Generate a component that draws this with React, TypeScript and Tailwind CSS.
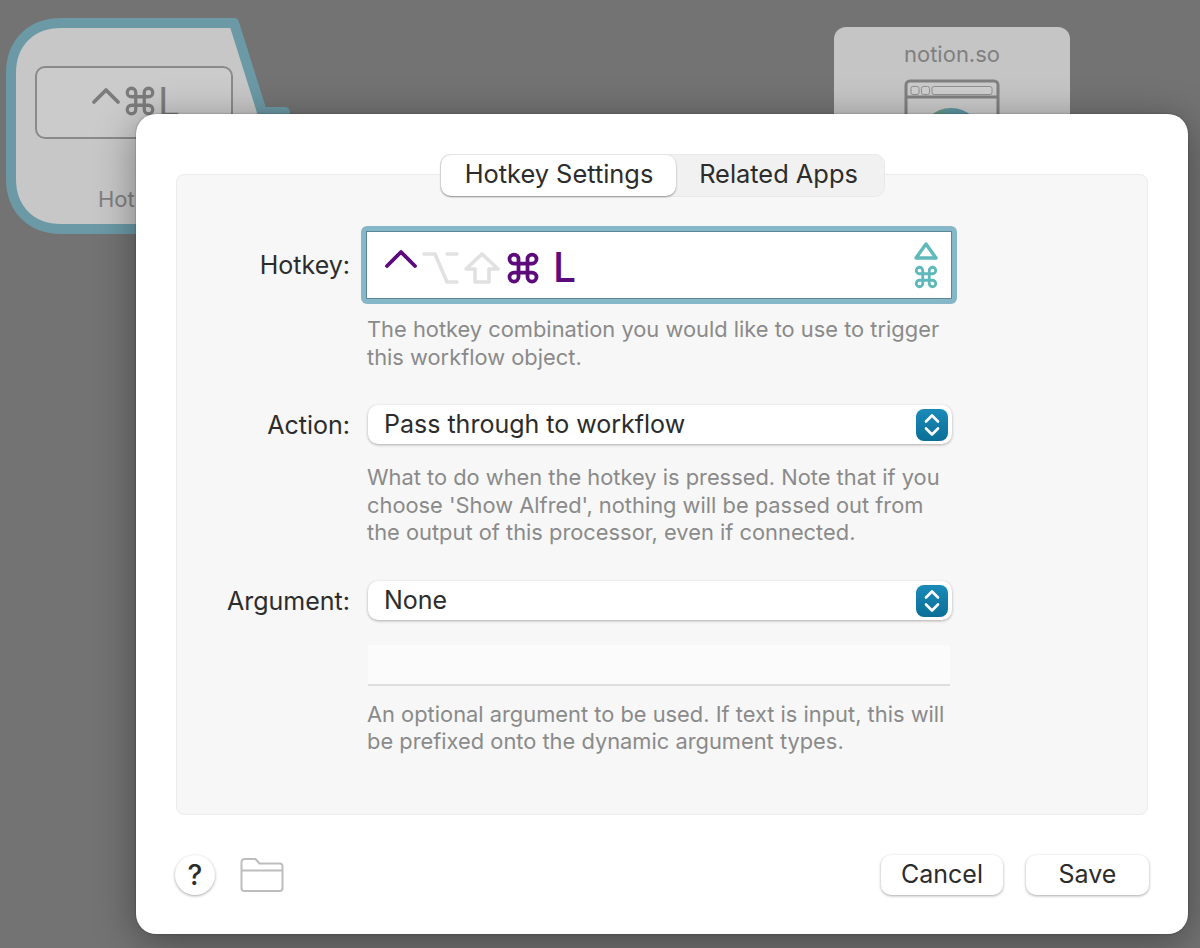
import { Command } from 'lucide-react';

const font = "font-['Inter','Liberation_Sans',sans-serif]";

function SelectField({ value }: { value: string }) {
  return (
    <div className="flex h-[39px] w-[584px] items-center justify-between rounded-[10px] bg-white pl-[16px] pr-[4px] text-[25px] text-[#2c2c2c] shadow-[0_1px_3px_rgba(0,0,0,0.3)]">
      <span>{value}</span>
      <span className="flex h-[32px] w-[32px] items-center justify-center rounded-[8px] bg-gradient-to-b from-[#1a8bb8] to-[#0b6f97]">
        <svg width="18" height="26" viewBox="0 0 18 26" fill="none" stroke="white" strokeWidth="2.6" strokeLinecap="round" strokeLinejoin="round">
          <path d="M3 9.5 9 3.5l6 6" />
          <path d="M3 16.5l6 6 6-6" />
        </svg>
      </span>
    </div>
  );
}

function Description({ children, className }: { children: React.ReactNode; className: string }) {
  return <p className={`text-[21.85px] leading-[27.5px] text-[#8a8a8a] ${className}`}>{children}</p>;
}

function Label({ children }: { children: React.ReactNode }) {
  return <div className="w-[173px] shrink-0 pt-[2px] text-right text-[25px] text-[#2c2c2c]">{children}</div>;
}

function HotkeyNode() {
  return (
    <div className="absolute left-0 top-0 h-[240px] w-[300px]">
      <svg width="300" height="240" viewBox="0 0 300 240" className="absolute inset-0">
        <path
          d="M61 23H234L262 112H285V229H61C31 229 11 209 11 179V73C11 43 31 23 61 23Z"
          fill="#c7c7c7"
          stroke="#6b99a5"
          strokeWidth="10"
          strokeLinejoin="round"
        />
      </svg>
      <div className="absolute left-[35px] top-[66px] flex h-[73px] w-[198px] items-center rounded-[10px] border-2 border-[#8a8a8a] bg-[#cbcbcb] pb-[3px] pl-[54px] text-[#7c7c7c]">
        <svg width="30" height="18" viewBox="0 0 30 18" fill="none" stroke="currentColor" strokeWidth="3.8" strokeLinecap="round" strokeLinejoin="round" className="mb-[10px]">
          <path d="M3 15 15 3l12 12" />
        </svg>
        <Command size={34} strokeWidth={2.3} className="ml-[2px]" />
        <span className="ml-[1px] text-[39px] leading-none">L</span>
      </div>
      <div className="absolute left-[98px] top-[183px] text-[22px] text-[#7f7f7f]">Hot</div>
    </div>
  );
}

function NotionNode() {
  return (
    <div className="absolute left-[834px] top-[27px] flex h-[120px] w-[236px] flex-col items-center rounded-[12px] bg-[#c5c5c5] pt-[13px]">
      <div className="text-[22px] leading-[28px] text-[#7f7f7f]">notion.so</div>
      <svg width="96" height="50" viewBox="0 0 96 50" className="mt-[11px]" fill="none">
        <defs>
          <linearGradient id="globe" x1="0" y1="0" x2="1" y2="0">
            <stop offset="0" stopColor="#6f9f6a" />
            <stop offset="0.5" stopColor="#5e97a0" />
            <stop offset="1" stopColor="#5c8fb0" />
          </linearGradient>
        </defs>
        <rect x="2" y="2" width="92" height="60" rx="4" fill="#cbcbcb" stroke="#808080" strokeWidth="3" />
        <path d="M2 18H94" stroke="#808080" strokeWidth="3" />
        <rect x="7" y="7.5" width="8" height="8" rx="2" fill="#cfcfcf" stroke="#909090" />
        <rect x="17.500" y="7.5" width="8" height="8" rx="2" fill="#cfcfcf" stroke="#909090" />
        <rect x="28" y="7.5" width="60" height="8" rx="2" fill="#cfcfcf" stroke="#909090" />
        <circle cx="47" cy="60" r="31" fill="url(#globe)" />
      </svg>
    </div>
  );
}

function HotkeyField() {
  return (
    <div className="flex h-[78px] w-[596px] items-center justify-between rounded-[6px] bg-[#86b7c8] p-[5px]">
      <div className="flex h-full w-full items-center justify-between border border-[#5c8796] bg-white pl-[17px] pr-[12px]">
        <div className="mt-[5px] flex items-center">
          <svg width="34" height="20" viewBox="0 0 34 20" fill="none" stroke="#5c0a7c" strokeWidth="3.8" strokeLinecap="round" strokeLinejoin="round" className="mb-[18px]">
            <path d="M3 17 17 3l14 14" />
          </svg>
          <svg width="38" height="34" viewBox="0 0 38 34" fill="none" stroke="#e1e1e1" strokeWidth="3.6" strokeLinecap="round" strokeLinejoin="round" className="ml-[4px]">
            <path d="M2 3h11l12 28h10M25 3h10" />
          </svg>
          <svg width="38" height="34" viewBox="0 0 38 34" fill="none" stroke="#e1e1e1" strokeWidth="3.6" strokeLinejoin="round" className="ml-[3px]">
            <path d="M19 3 35 18H26V31H12V18H3Z" />
          </svg>
          <Command size={36} strokeWidth={2.5} color="#5c0a7c" className="ml-[4px]" />
          <span className="ml-[12px] text-[41px] font-medium leading-none text-[#5c0a7c]">L</span>
        </div>
        <div className="flex flex-col items-center gap-[3px]">
          <svg width="26" height="20" viewBox="0 0 26 20" fill="none" stroke="#5fb8bb" strokeWidth="3.4" strokeLinejoin="round">
            <path d="M13 3 23 17H3Z" />
          </svg>
          <Command size={26} strokeWidth={2.6} color="#5fb8bb" />
        </div>
      </div>
    </div>
  );
}

export default function App() {
  return (
    <div className={`relative h-[948px] w-[1200px] overflow-hidden bg-[#737373] ${font}`}>
      <HotkeyNode />
      <NotionNode />

      <div className="absolute left-[136px] top-[114px] flex h-[820px] w-[1052px] flex-col rounded-[20px] bg-white px-[40px] pt-[60px] shadow-[0_8px_40px_rgba(0,0,0,0.38),0_0_2px_rgba(0,0,0,0.4)]">
        <div className="relative h-[641px] rounded-[8px] border border-[#ececec] bg-[#f7f7f7] pt-[51px]">
          <div className="absolute -top-[21px] left-[263px] flex h-[43px] w-[445px] rounded-[10px] border border-[#e9e9e9] bg-[#f1f1f1] text-[25.4px] text-[#2c2c2c]">
            <div className="flex w-[235px] items-center justify-center rounded-[10px] bg-white pb-[2px] pl-[1px] shadow-[0_1px_2px_rgba(0,0,0,0.4)]">Hotkey Settings</div>
            <div className="flex flex-1 items-center justify-center pb-[2px] pr-[3px]">Related Apps</div>
          </div>

          <div className="flex items-center">
            <Label>Hotkey:</Label>
            <div className="ml-[11px]">
              <HotkeyField />
            </div>
          </div>
          <Description className="ml-[190px] mt-[12px]">
            The hotkey combination you would like to use to trigger
            <br />
            this workflow object.
          </Description>

          <div className="mt-[34px] flex items-center">
            <Label>Action:</Label>
            <div className="ml-[18px]">
              <SelectField value="Pass through to workflow" />
            </div>
          </div>
          <Description className="ml-[190px] mt-[19.5px]">
            What to do when the hotkey is pressed. Note that if you
            <br />
            choose 'Show Alfred', nothing will be passed out from
            <br />
            the output of this processor, even if connected.
          </Description>

          <div className="mt-[34.5px] flex items-center">
            <Label>Argument:</Label>
            <div className="ml-[18px]">
              <SelectField value="None" />
            </div>
          </div>
          <div className="ml-[191px] mt-[24px] h-[41px] w-[582px] border-b-2 border-[#dedede] bg-[#fbfbfb]" />
          <Description className="ml-[190px] mt-[15px]">
            An optional argument to be used. If text is input, this will
            <br />
            be prefixed onto the dynamic argument types.
          </Description>
        </div>

        <div className="-mx-px mt-[40px] flex items-center">
          <button className="flex h-[40px] w-[40px] items-center justify-center rounded-full bg-white text-[28px] font-medium text-[#2c2c2c] shadow-[0_1px_3px_rgba(0,0,0,0.35)]">?</button>
          <svg width="44" height="36" viewBox="0 0 44 36" fill="none" stroke="#bdbdbd" strokeWidth="2" strokeLinejoin="round" className="ml-[25px]">
            <path d="M1.500 5a3 3 0 0 1 3-3h11l4 4.500h20a3 3 0 0 1 3 3V31a3 3 0 0 1-3 3h-35a3 3 0 0 1-3-3Z" />
            <path d="M1.500 13.500h41" />
          </svg>
          <button className="ml-auto h-[40px] w-[122px] rounded-[10px] bg-white text-[25px] text-[#2c2c2c] shadow-[0_1px_3px_rgba(0,0,0,0.35)]">Cancel</button>
          <button className="ml-[23px] h-[40px] w-[123px] rounded-[10px] bg-white text-[25px] text-[#2c2c2c] shadow-[0_1px_3px_rgba(0,0,0,0.35)]">Save</button>
        </div>
      </div>
    </div>
  );
}
